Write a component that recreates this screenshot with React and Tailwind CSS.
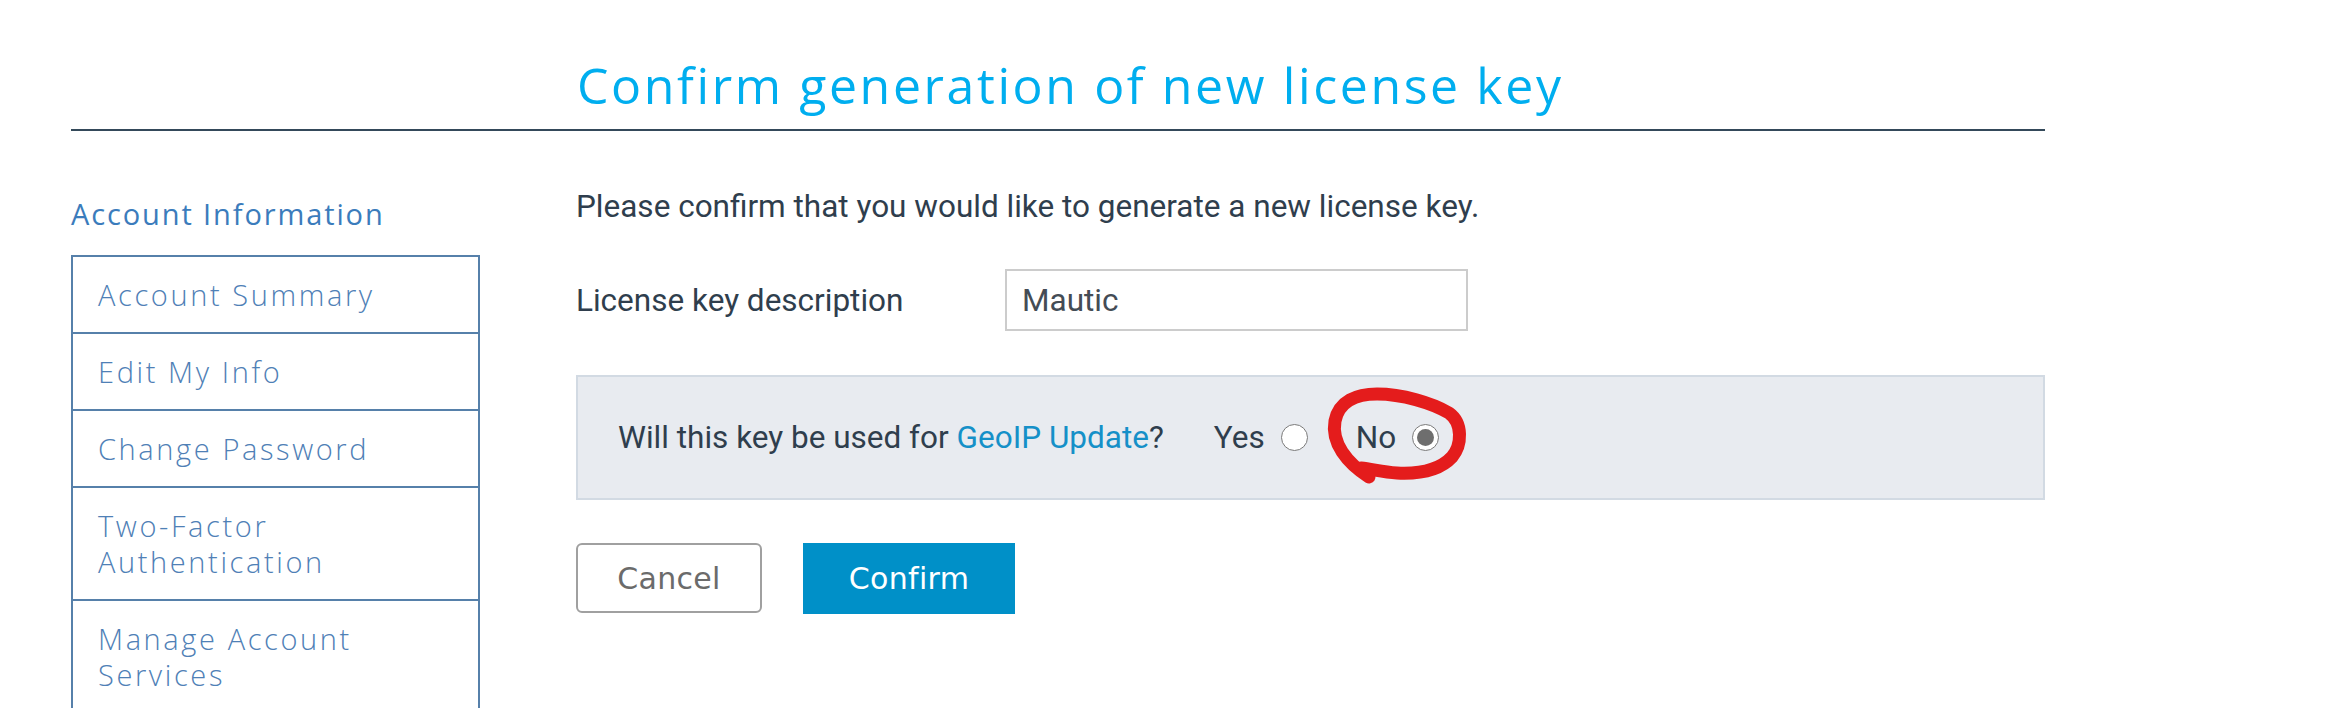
import React from "react";

const MONT = { fontFamily: '"Open Sans", "Noto Sans", sans-serif' };
const BTN = { fontFamily: '"DejaVu Sans", "Open Sans", sans-serif' };

function Radio({ checked }) {
  return (
    <span className="inline-flex h-[27px] w-[27px] items-center justify-center rounded-full border border-[#7a7a7a] bg-white">
      {checked && <span className="h-[17px] w-[17px] rounded-full bg-[#6e6e6e]" />}
    </span>
  );
}

export default function App() {
  const items = [
    "Account Summary",
    "Edit My Info",
    "Change Password",
    "Two-Factor Authentication",
    "Manage Account Services",
  ];
  return (
    <div className="h-[708px] w-[2330px] overflow-hidden bg-white">
      <div className="ml-[71px] w-[1974px]">
        <div className="grid grid-cols-[409px_1fr] gap-x-[96px] border-b-2 border-[#34495a] pb-[14px] pt-[55px]">
          <div />
          <h1
            className="pl-[1px] text-[50px] font-normal leading-[60px] tracking-[0.052em] text-[#00aeef]"
            style={MONT}
          >
            Confirm generation of new license key
          </h1>
        </div>

        <div className="grid grid-cols-[409px_1fr] gap-x-[96px]">
          <aside className="pt-[66px]">
            <h2
              className="text-[29px] font-medium leading-[34px] tracking-[0.065em] text-[#3b7cbc]"
              style={MONT}
            >
              Account Information
            </h2>
            <ul className="mt-[24px] border-2 border-[#5680aa]">
              {items.map((t, i) => (
                <li
                  key={t}
                  className={
                    "pl-[25px] pr-[20px] py-[19.5px] text-[29px] font-light leading-[36px] tracking-[0.09em] text-[#4f80b6] " +
                    (i < items.length - 1 ? "border-b-2 border-[#5680aa]" : "pb-[60px]")
                  }
                  style={MONT}
                >
                  {t}
                </li>
              ))}
            </ul>
          </aside>

          <main
            className="pt-[53px] text-[31.5px] leading-[45px] text-[#2f3e4d]"
            style={{ fontFamily: 'Roboto, "Liberation Sans", sans-serif' }}
          >
            <p>Please confirm that you would like to generate a new license key.</p>

            <div className="mt-[40px] flex items-center">
              <label className="w-[429px]">License key description</label>
              <div className="flex h-[62px] w-[463px] items-center border-2 border-[#cccccc] bg-white pl-[15px] text-[#444c55]">
                Mautic
              </div>
            </div>

            <div className="mt-[44px] flex h-[125px] items-center border-2 border-[#d2dae3] bg-[#e8ebf0] pl-[40px]">
              <span>
                Will this key be used for{" "}
                <span className="text-[#1590c8]">GeoIP Update</span>?
              </span>
              <span className="ml-[50px] flex items-center gap-[16px]">
                Yes <Radio />
              </span>
              <span className="relative ml-[48px] flex items-center gap-[16px]">
                No <Radio checked />
                <svg
                  className="pointer-events-none absolute left-[-39px] top-[-32px]"
                  width="160"
                  height="110"
                  viewBox="0 0 160 110"
                  fill="none"
                >
                  <path
                    d="M52,94 C30,80 14,60 18,38 C22,18 40,11 60,11 C85,11 115,20 132,30 C146,40 145,62 135,74 C122,88 100,91 80,90 C65,89 55,86 44,85"
                    stroke="#e41c1c"
                    strokeWidth="13"
                    strokeLinecap="round"
                    strokeLinejoin="round"
                  />
                </svg>
              </span>
            </div>

            <div className="mt-[43px] flex gap-[41px]" style={BTN}>
              <button className="h-[70px] w-[186px] rounded-[6px] border-2 border-[#a0a0a0] bg-white text-[30px] font-normal tracking-[0.01em] text-[#6b6b6b]">
                Cancel
              </button>
              <button className="h-[71px] w-[212px] bg-[#0090c8] text-[30px] font-normal tracking-[0.01em] text-white">
                Confirm
              </button>
            </div>
          </main>
        </div>
      </div>
    </div>
  );
}
